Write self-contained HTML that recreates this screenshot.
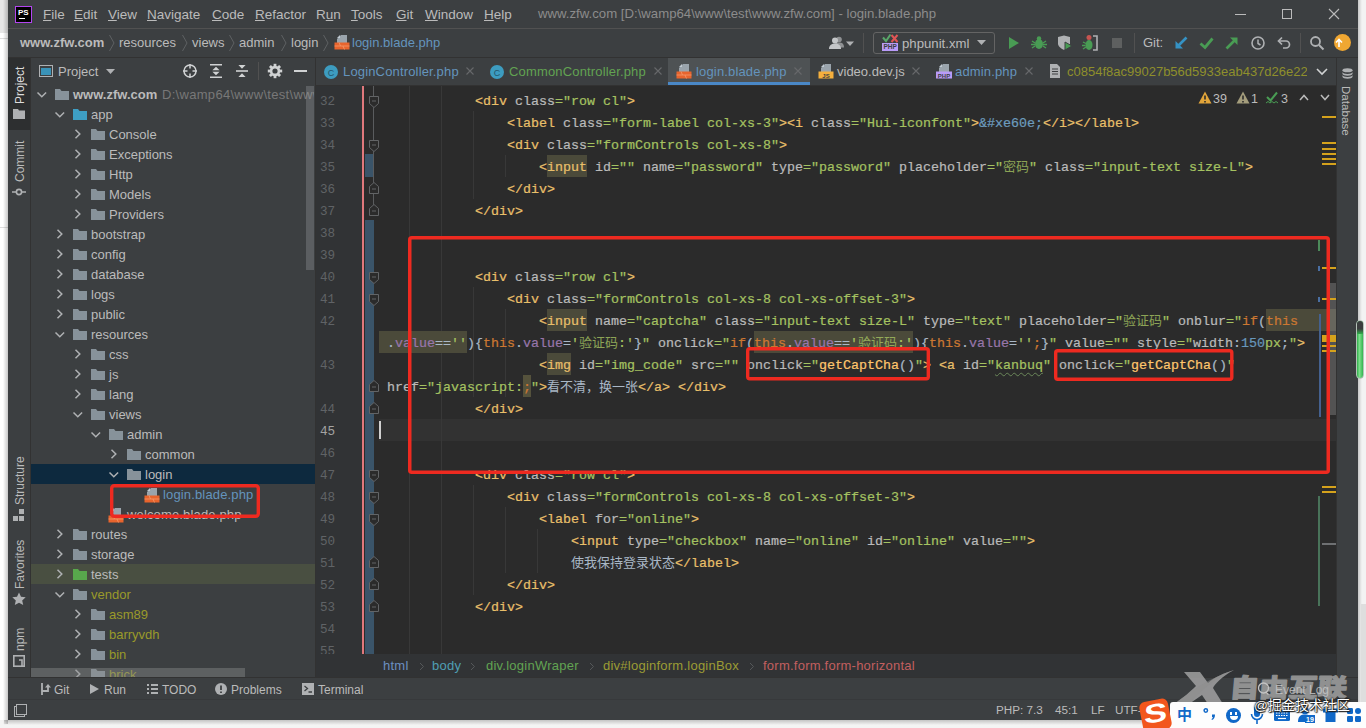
<!DOCTYPE html>
<html><head><meta charset="utf-8"><title>PhpStorm</title>
<style>
*{box-sizing:border-box;margin:0;padding:0}
html,body{width:1366px;height:728px;overflow:hidden;background:#fff}
body{position:relative;font-family:'Liberation Sans','Noto Sans CJK SC',sans-serif;font-size:13px;color:#bbb}
.a{position:absolute}
.t{position:absolute;white-space:pre;line-height:20px;height:20px;margin-top:1px}
#win{position:absolute;left:8px;top:0;width:1350px;height:720px;background:#3c3f41;overflow:hidden}
.code{position:absolute;white-space:pre;font-family:'Liberation Mono','Noto Sans CJK SC',monospace;font-size:13.33px;line-height:22px;height:22px;color:#a9b7c6;margin-top:2px;-webkit-text-stroke:.22px}
.ln{position:absolute;left:0;width:26px;text-align:right;font-family:'Liberation Mono','Noto Sans CJK SC',monospace;font-size:12.6px;line-height:22px;height:22px;color:#606366;margin-top:2px}
.tg{color:#e8bf6a} .at{color:#bababa} .st{color:#a5c261} .kw{color:#cc7832} .nu{color:#6897bb} .en{color:#6d9cbe} .fn{color:#ffc66d} .pr{color:#9876aa}
.hl{background:#4b4a3a;padding:5px 0 2px} .hl2{background:#55523c;padding:5px 0 2px}
.row{position:absolute;left:0;width:285px;height:20px}
.fold{position:absolute;width:14px;height:11px}
.cj{font-size:13px;-webkit-text-stroke:0}.st .cj{opacity:.8}.wavy{text-decoration:underline wavy #6a8759;text-decoration-thickness:1px;text-underline-offset:3px}</style></head>
<body>
<div class="a" style="left:0;top:0;width:8px;height:33px;background:#e6e6e6"></div>
<div class="a" style="left:0;top:38px;width:8px;height:1px;background:#ddd"></div>
<div class="a" style="left:0;top:227px;width:8px;height:1px;background:#ddd"></div>
<div class="a" style="left:1358px;top:0;width:8px;height:728px;background:#f3f3f3"></div>
<div class="a" style="left:0;top:720px;width:1366px;height:8px;background:#f4f4f4"></div>
<div class="a" style="left:3px;top:0;width:5px;height:724px;background:linear-gradient(90deg,rgba(0,0,0,0),rgba(0,0,0,.22))"></div>
<div class="a" style="left:4px;top:720px;width:1358px;height:5px;background:linear-gradient(rgba(0,0,0,.2),rgba(0,0,0,0))"></div>
<div class="a" style="left:1358px;top:0;width:4px;height:724px;background:linear-gradient(90deg,rgba(0,0,0,.18),rgba(0,0,0,0))"></div>
<div id="win">
<div class="a" style="left:0;top:0;width:1350px;height:29px;background:#3c3f41"></div>
<div class="a" style="left:0;top:28px;width:1350px;height:1px;background:#515151"></div>
<div class="a" style="left:7px;top:6px;width:17px;height:17px;background:#000;border:1px solid #b345f1"><span class="a" style="left:2px;top:1px;font:bold 8px/9px 'Liberation Sans','Noto Sans CJK SC',sans-serif;color:#fff">PS</span><span class="a" style="left:3px;top:11px;width:6px;height:1px;background:#fff"></span></div>
<span class="t" style="left:35px;top:4px;font-size:13.5px;color:#bbb"><u>F</u>ile</span>
<span class="t" style="left:66px;top:4px;font-size:13.5px;color:#bbb"><u>E</u>dit</span>
<span class="t" style="left:100px;top:4px;font-size:13.5px;color:#bbb"><u>V</u>iew</span>
<span class="t" style="left:139px;top:4px;font-size:13.5px;color:#bbb"><u>N</u>avigate</span>
<span class="t" style="left:204px;top:4px;font-size:13.5px;color:#bbb"><u>C</u>ode</span>
<span class="t" style="left:247px;top:4px;font-size:13.5px;color:#bbb"><u>R</u>efactor</span>
<span class="t" style="left:308px;top:4px;font-size:13.5px;color:#bbb">R<u>u</u>n</span>
<span class="t" style="left:343px;top:4px;font-size:13.5px;color:#bbb"><u>T</u>ools</span>
<span class="t" style="left:388px;top:4px;font-size:13.5px;color:#bbb"><u>G</u>it</span>
<span class="t" style="left:417px;top:4px;font-size:13.5px;color:#bbb"><u>W</u>indow</span>
<span class="t" style="left:476px;top:4px;font-size:13.5px;color:#bbb"><u>H</u>elp</span>
<span class="t" style="left:530px;top:3px;font-size:13.2px;color:#8c8c8c">www.zfw.com [D:\wamp64\www\test\www.zfw.com] - login.blade.php</span>
<div class="a" style="left:1227px;top:14px;width:11px;height:1px;background:#bbb"></div>
<div class="a" style="left:1274px;top:9px;width:10px;height:10px;border:1px solid #bbb"></div>
<svg class="a" style="left:1320px;top:8px" width="12" height="12"><path d="M1 1L11 11M11 1L1 11" stroke="#bbb" stroke-width="1.1"/></svg>
<div class="a" style="left:0;top:29px;width:1350px;height:28px;background:#3c3f41"></div>
<div class="a" style="left:0;top:57px;width:1350px;height:1px;background:#323232"></div>
<span class="t" style="left:12px;top:32px;font-weight:bold;color:#bbb">www.zfw.com</span>
<span class="t" style="left:111px;top:32px">resources</span>
<span class="t" style="left:184px;top:32px">views</span>
<span class="t" style="left:231px;top:32px">admin</span>
<span class="t" style="left:283px;top:32px">login</span>
<svg class="a" style="left:100px;top:34px" width="8" height="18"><path d="M1.5 1L6 9L1.5 17" fill="none" stroke="#5e6163" stroke-width="1"/></svg>
<svg class="a" style="left:173px;top:34px" width="8" height="18"><path d="M1.5 1L6 9L1.5 17" fill="none" stroke="#5e6163" stroke-width="1"/></svg>
<svg class="a" style="left:220px;top:34px" width="8" height="18"><path d="M1.5 1L6 9L1.5 17" fill="none" stroke="#5e6163" stroke-width="1"/></svg>
<svg class="a" style="left:272px;top:34px" width="8" height="18"><path d="M1.5 1L6 9L1.5 17" fill="none" stroke="#5e6163" stroke-width="1"/></svg>
<svg class="a" style="left:314px;top:34px" width="8" height="18"><path d="M1.5 1L6 9L1.5 17" fill="none" stroke="#5e6163" stroke-width="1"/></svg>
<svg class="a" style="left:326px;top:34px" width="16" height="16" viewBox="0 0 16 16"><path d="M7 1h6v8H3V5z" fill="#9aa4ac"/><path d="M6 1v3H3z" fill="#c0cad2"/><rect x=".5" y="8.500" width="15" height="7" fill="#e8642d"/><path d="M.5 12h15M5 8.500l1.500 3.500M9 12l1.500 3.500" stroke="#f59a6d" stroke-width=".8"/></svg>
<span class="t" style="left:344px;top:32px;color:#6494bd">login.blade.php</span>
<svg class="a" style="left:821px;top:36px" width="28" height="14" viewBox="0 0 28 14"><circle cx="10" cy="3.5" r="2.800" fill="#8f9193"/><path d="M5 11.500c0-4 2-5 5-5s5 1 5 5z" fill="#8f9193"/><circle cx="6" cy="4.500" r="3" fill="#c4c6c8"/><path d="M0 13c0-4 3-5.500 6-5.500s6 1.500 6 5.500z" fill="#c4c6c8"/><path d="M17 5.500h8l-4 4.500z" fill="#afb1b3"/></svg>
<div class="a" style="left:855px;top:33px;width:1px;height:20px;background:#515151"></div>
<div class="a" style="left:865px;top:32px;width:122px;height:22px;border:1px solid #646464;border-radius:3px"></div>
<div class="a" style="left:874px;top:43px;width:16px;height:8px;background:#b99bf8"><span class="a" style="left:1.500px;top:0;font:bold 6.500px/8px 'Liberation Sans','Noto Sans CJK SC',sans-serif;color:#3c3f41">PHP</span></div>
<svg class="a" style="left:874px;top:33px" width="17" height="10"><path d="M1 4.500L4 8L8.500 1.500" stroke="#59a869" stroke-width="2" fill="none"/><path d="M9.500 2L15.500 9M15.500 2L9.500 9" stroke="#e05555" stroke-width="2" fill="none"/></svg>
<span class="t" style="left:894px;top:33px;color:#bbb;font-size:13.2px">phpunit.xml</span>
<svg class="a" style="left:969px;top:40px" width="10" height="6"><path d="M0 0h9l-4.5 5z" fill="#afb1b3"/></svg>
<svg class="a" style="left:1000px;top:36px" width="12" height="14"><path d="M1 1l10 6-10 6z" fill="#499c54"/></svg>
<svg class="a" style="left:1023px;top:35px" width="16" height="16" viewBox="0 0 16 16"><ellipse cx="8" cy="9" rx="4" ry="5" fill="#499c54"/><circle cx="8" cy="3.5" r="2.2" fill="#499c54"/><path d="M1 6l3 2M15 6l-3 2M1 13l3-2M15 13l-3-2M0 9.5h4M16 9.5h-4" stroke="#499c54" stroke-width="1.4"/></svg>
<svg class="a" style="left:1048px;top:35px" width="17" height="16" viewBox="0 0 17 16"><path d="M2 2l6-1.5L14 2v7c0 3-6 6-6 6S2 12 2 9z" fill="#afb1b3"/><path d="M9 7l7 4-7 4z" fill="#499c54" stroke="#3c3f41" stroke-width="1"/></svg>
<svg class="a" style="left:1074px;top:34px" width="17" height="18" viewBox="0 0 17 18"><circle cx="7" cy="3.5" r="2.5" fill="#c75450"/><ellipse cx="7" cy="11" rx="3.5" ry="5" fill="#499c54"/><path d="M1 8l3 1.5M1 15l3-2M0 11.5h3.5" stroke="#499c54" stroke-width="1.3"/><path d="M11 2h4v14h-4" fill="none" stroke="#afb1b3" stroke-width="1.6"/></svg>
<div class="a" style="left:1104px;top:38px;width:10px;height:10px;background:#5e6060"></div>
<div class="a" style="left:1126px;top:33px;width:1px;height:20px;background:#515151"></div>
<span class="t" style="left:1135px;top:32px;color:#bbb">Git:</span>
<svg class="a" style="left:1166px;top:36px" width="14" height="14"><path d="M12.500 1.500L4 10" fill="none" stroke="#3592c4" stroke-width="2.600"/><path d="M1.500 5v7.500H9z" fill="#3592c4"/></svg>
<svg class="a" style="left:1191px;top:36px" width="15" height="14"><path d="M1.500 7.500l4.500 4L13.500 2.500" fill="none" stroke="#499c54" stroke-width="2.800"/></svg>
<svg class="a" style="left:1217px;top:36px" width="14" height="14"><path d="M1.500 12.500L10 4" fill="none" stroke="#499c54" stroke-width="2.600"/><path d="M5 1.500h7.500V9z" fill="#499c54"/></svg>
<svg class="a" style="left:1242px;top:35px" width="16" height="16"><circle cx="8" cy="8" r="6" fill="none" stroke="#afb1b3" stroke-width="1.6"/><path d="M8 4.5V8.5l2.5 1.5" fill="none" stroke="#afb1b3" stroke-width="1.5"/></svg>
<svg class="a" style="left:1268px;top:35px" width="16" height="16"><path d="M3 6h7a3.5 3.5 0 010 7H7" fill="none" stroke="#afb1b3" stroke-width="1.7"/><path d="M6 2.5L2.5 6L6 9.5" fill="none" stroke="#afb1b3" stroke-width="1.7"/></svg>
<div class="a" style="left:1292px;top:33px;width:1px;height:20px;background:#515151"></div>
<svg class="a" style="left:1301px;top:35px" width="16" height="16"><circle cx="6.5" cy="6.5" r="4.5" fill="none" stroke="#afb1b3" stroke-width="1.8"/><path d="M10 10l4.5 4.5" stroke="#afb1b3" stroke-width="2"/></svg>
<div class="a" style="left:1326px;top:34px;width:17px;height:17px;border-radius:9px;background:#f0a732"></div>
<svg class="a" style="left:1323px;top:35px" width="16" height="16"><path d="M8 12V5M5 7.5L8 4.5l3 3" fill="none" stroke="#fff" stroke-width="1.6"/></svg>
<div class="a" style="left:0;top:58px;width:22px;height:620px;background:#3c3f41"></div>
<div class="a" style="left:0;top:58px;width:22px;height:72px;background:#2d2f30"></div>
<div class="a" style="left:22px;top:58px;width:1px;height:620px;background:#323232"></div>
<span class="a" style="left:4px;top:104px;transform-origin:0 0;transform:rotate(-90deg);white-space:pre;font-size:12px;line-height:16px;height:16px;color:#ddd">Project</span>
<svg class="a" style="left:5px;top:108px" width="12" height="11"><path d="M0 1h5l1 1.5h6V11H0z" fill="#afb1b3"/></svg>
<span class="a" style="left:4px;top:182px;transform-origin:0 0;transform:rotate(-90deg);white-space:pre;font-size:12px;line-height:16px;height:16px;color:#bbb">Commit</span>
<svg class="a" style="left:4px;top:186px" width="14" height="12"><circle cx="7" cy="6" r="2.600" fill="none" stroke="#afb1b3" stroke-width="1.600"/><path d="M0 6h4M10 6h4" stroke="#afb1b3" stroke-width="1.600"/></svg>
<span class="a" style="left:4px;top:504.5px;transform-origin:0 0;transform:rotate(-90deg);white-space:pre;font-size:12px;line-height:16px;height:16px;color:#bbb">Structure</span>
<svg class="a" style="left:5px;top:509px" width="12" height="12"><rect x="6" y="0" width="5" height="5" fill="#afb1b3"/><rect x="0" y="7" width="5" height="5" fill="#afb1b3"/><rect x="6" y="7" width="5" height="5" fill="#afb1b3"/></svg>
<span class="a" style="left:4px;top:589px;transform-origin:0 0;transform:rotate(-90deg);white-space:pre;font-size:12px;line-height:16px;height:16px;color:#bbb">Favorites</span>
<svg class="a" style="left:4px;top:592px" width="14" height="14" viewBox="0 0 14 14"><path d="M7 .5l2 4.3 4.7.5-3.5 3.2 1 4.6L7 10.800 2.800 13.100l1-4.600L.3 5.300 5 4.800z" fill="#afb1b3"/></svg>
<span class="a" style="left:4px;top:650.5px;transform-origin:0 0;transform:rotate(-90deg);white-space:pre;font-size:12px;line-height:16px;height:16px;color:#bbb">npm</span>
<svg class="a" style="left:5px;top:655px" width="12" height="12"><rect x=".8" y=".8" width="10.400" height="10.400" fill="none" stroke="#afb1b3" stroke-width="1.6"/><path d="M6 5h3v6" fill="none" stroke="#afb1b3" stroke-width="1.6"/></svg>
<div class="a" style="left:23px;top:58px;width:284px;height:620px;background:#3c3f41"></div>
<div class="a" style="left:31px;top:65px;width:14px;height:12px;border:1px solid #afb1b3;background:#3c3f41"><div class="a" style="left:1px;top:2px;width:10px;height:7px;background:#3a93b8"></div></div>
<span class="t" style="left:50px;top:61px;color:#bbb">Project</span>
<svg class="a" style="left:98px;top:69px" width="9" height="6"><path d="M0 0h9l-4.5 5z" fill="#afb1b3"/></svg>
<svg class="a" style="left:174px;top:63px" width="16" height="16"><circle cx="8" cy="8" r="6" fill="none" stroke="#d0d2d3" stroke-width="1.5"/><path d="M8 1v4.500M8 10.500V15M1 8h4.500M10.500 8H15" stroke="#d0d2d3" stroke-width="1.5"/></svg>
<svg class="a" style="left:200px;top:63px" width="16" height="16"><path d="M2 1.800h12M2 14.200h12" stroke="#d0d2d3" stroke-width="1.600"/><path d="M8 3.800l3.600 3.400H4.400zM8 12.200l3.600-3.400H4.400z" fill="#d0d2d3"/></svg>
<svg class="a" style="left:226px;top:63px" width="16" height="16"><path d="M2 8h12" stroke="#d0d2d3" stroke-width="1.600"/><path d="M8 5.800l3.600-3.800H4.400zM8 10.200l3.600 3.800H4.400z" fill="#d0d2d3"/></svg>
<div class="a" style="left:250px;top:62px;width:1px;height:18px;background:#515151"></div>
<svg class="a" style="left:259px;top:63px" width="16" height="16" viewBox="0 0 16 16"><rect x="6.600" y=".8" width="2.800" height="3.400" transform="rotate(0 8 8)" fill="#d0d2d3"/><rect x="6.600" y=".8" width="2.800" height="3.400" transform="rotate(45 8 8)" fill="#d0d2d3"/><rect x="6.600" y=".8" width="2.800" height="3.400" transform="rotate(90 8 8)" fill="#d0d2d3"/><rect x="6.600" y=".8" width="2.800" height="3.400" transform="rotate(135 8 8)" fill="#d0d2d3"/><rect x="6.600" y=".8" width="2.800" height="3.400" transform="rotate(180 8 8)" fill="#d0d2d3"/><rect x="6.600" y=".8" width="2.800" height="3.400" transform="rotate(225 8 8)" fill="#d0d2d3"/><rect x="6.600" y=".8" width="2.800" height="3.400" transform="rotate(270 8 8)" fill="#d0d2d3"/><rect x="6.600" y=".8" width="2.800" height="3.400" transform="rotate(315 8 8)" fill="#d0d2d3"/><circle cx="8" cy="8" r="3.900" fill="none" stroke="#d0d2d3" stroke-width="2.600"/></svg>
<div class="a" style="left:286px;top:70px;width:13px;height:2px;background:#d0d2d3"></div>
<svg class="a" style="left:28px;top:91px" width="12" height="8"><path d="M1.500 1.500L5.800 5.800L10.100 1.500" fill="none" stroke="#afb1b3" stroke-width="1.500"/></svg>
<svg class="a" style="left:47px;top:89px" width="14" height="11" viewBox="0 0 14 11"><path d="M0 0h5l1.500 2H14v9H0z" fill="#87929a"/></svg>
<span class="t" style="left:65px;top:84px;color:#bbb;font-weight:bold">www.zfw.com</span>
<span class="t" style="left:154px;top:84px;color:#787878;width:152px;overflow:hidden;letter-spacing:.3px">D:\wamp64\www\test\www.zfw.com</span>
<svg class="a" style="left:46px;top:111px" width="12" height="8"><path d="M1.500 1.500L5.800 5.800L10.100 1.500" fill="none" stroke="#afb1b3" stroke-width="1.500"/></svg>
<svg class="a" style="left:65px;top:109px" width="14" height="11" viewBox="0 0 14 11"><path d="M0 0h5l1.500 2H14v9H0z" fill="#3e9fc4"/></svg>
<span class="t" style="left:83px;top:104px;color:#bbb;font-weight:normal">app</span>
<svg class="a" style="left:66px;top:128px" width="8" height="12"><path d="M1.500 1.800L5.800 6L1.500 10.200" fill="none" stroke="#afb1b3" stroke-width="1.500"/></svg>
<svg class="a" style="left:83px;top:129px" width="14" height="11" viewBox="0 0 14 11"><path d="M0 0h5l1.500 2H14v9H0z" fill="#87929a"/></svg>
<span class="t" style="left:101px;top:124px;color:#bbb;font-weight:normal">Console</span>
<svg class="a" style="left:66px;top:148px" width="8" height="12"><path d="M1.500 1.800L5.800 6L1.500 10.200" fill="none" stroke="#afb1b3" stroke-width="1.500"/></svg>
<svg class="a" style="left:83px;top:149px" width="14" height="11" viewBox="0 0 14 11"><path d="M0 0h5l1.500 2H14v9H0z" fill="#87929a"/></svg>
<span class="t" style="left:101px;top:144px;color:#bbb;font-weight:normal">Exceptions</span>
<svg class="a" style="left:66px;top:168px" width="8" height="12"><path d="M1.500 1.800L5.800 6L1.500 10.200" fill="none" stroke="#afb1b3" stroke-width="1.500"/></svg>
<svg class="a" style="left:83px;top:169px" width="14" height="11" viewBox="0 0 14 11"><path d="M0 0h5l1.500 2H14v9H0z" fill="#87929a"/></svg>
<span class="t" style="left:101px;top:164px;color:#bbb;font-weight:normal">Http</span>
<svg class="a" style="left:66px;top:188px" width="8" height="12"><path d="M1.500 1.800L5.800 6L1.500 10.200" fill="none" stroke="#afb1b3" stroke-width="1.500"/></svg>
<svg class="a" style="left:83px;top:189px" width="14" height="11" viewBox="0 0 14 11"><path d="M0 0h5l1.500 2H14v9H0z" fill="#87929a"/></svg>
<span class="t" style="left:101px;top:184px;color:#bbb;font-weight:normal">Models</span>
<svg class="a" style="left:66px;top:208px" width="8" height="12"><path d="M1.500 1.800L5.800 6L1.500 10.200" fill="none" stroke="#afb1b3" stroke-width="1.500"/></svg>
<svg class="a" style="left:83px;top:209px" width="14" height="11" viewBox="0 0 14 11"><path d="M0 0h5l1.500 2H14v9H0z" fill="#87929a"/></svg>
<span class="t" style="left:101px;top:204px;color:#bbb;font-weight:normal">Providers</span>
<svg class="a" style="left:48px;top:228px" width="8" height="12"><path d="M1.500 1.800L5.800 6L1.500 10.200" fill="none" stroke="#afb1b3" stroke-width="1.500"/></svg>
<svg class="a" style="left:65px;top:229px" width="14" height="11" viewBox="0 0 14 11"><path d="M0 0h5l1.500 2H14v9H0z" fill="#87929a"/></svg>
<span class="t" style="left:83px;top:224px;color:#bbb;font-weight:normal">bootstrap</span>
<svg class="a" style="left:48px;top:248px" width="8" height="12"><path d="M1.500 1.800L5.800 6L1.500 10.200" fill="none" stroke="#afb1b3" stroke-width="1.500"/></svg>
<svg class="a" style="left:65px;top:249px" width="14" height="11" viewBox="0 0 14 11"><path d="M0 0h5l1.500 2H14v9H0z" fill="#87929a"/></svg>
<span class="t" style="left:83px;top:244px;color:#bbb;font-weight:normal">config</span>
<svg class="a" style="left:48px;top:268px" width="8" height="12"><path d="M1.500 1.800L5.800 6L1.500 10.200" fill="none" stroke="#afb1b3" stroke-width="1.500"/></svg>
<svg class="a" style="left:65px;top:269px" width="14" height="11" viewBox="0 0 14 11"><path d="M0 0h5l1.500 2H14v9H0z" fill="#87929a"/></svg>
<span class="t" style="left:83px;top:264px;color:#bbb;font-weight:normal">database</span>
<svg class="a" style="left:48px;top:288px" width="8" height="12"><path d="M1.500 1.800L5.800 6L1.500 10.200" fill="none" stroke="#afb1b3" stroke-width="1.500"/></svg>
<svg class="a" style="left:65px;top:289px" width="14" height="11" viewBox="0 0 14 11"><path d="M0 0h5l1.500 2H14v9H0z" fill="#87929a"/></svg>
<span class="t" style="left:83px;top:284px;color:#bbb;font-weight:normal">logs</span>
<svg class="a" style="left:48px;top:308px" width="8" height="12"><path d="M1.500 1.800L5.800 6L1.500 10.200" fill="none" stroke="#afb1b3" stroke-width="1.500"/></svg>
<svg class="a" style="left:65px;top:309px" width="14" height="11" viewBox="0 0 14 11"><path d="M0 0h5l1.500 2H14v9H0z" fill="#87929a"/></svg>
<span class="t" style="left:83px;top:304px;color:#bbb;font-weight:normal">public</span>
<svg class="a" style="left:46px;top:331px" width="12" height="8"><path d="M1.500 1.500L5.800 5.800L10.100 1.500" fill="none" stroke="#afb1b3" stroke-width="1.500"/></svg>
<svg class="a" style="left:65px;top:329px" width="14" height="11" viewBox="0 0 14 11"><path d="M0 0h5l1.500 2H14v9H0z" fill="#87929a"/></svg>
<span class="t" style="left:83px;top:324px;color:#bbb;font-weight:normal">resources</span>
<svg class="a" style="left:66px;top:348px" width="8" height="12"><path d="M1.500 1.800L5.800 6L1.500 10.200" fill="none" stroke="#afb1b3" stroke-width="1.500"/></svg>
<svg class="a" style="left:83px;top:349px" width="14" height="11" viewBox="0 0 14 11"><path d="M0 0h5l1.500 2H14v9H0z" fill="#87929a"/></svg>
<span class="t" style="left:101px;top:344px;color:#bbb;font-weight:normal">css</span>
<svg class="a" style="left:66px;top:368px" width="8" height="12"><path d="M1.500 1.800L5.800 6L1.500 10.200" fill="none" stroke="#afb1b3" stroke-width="1.500"/></svg>
<svg class="a" style="left:83px;top:369px" width="14" height="11" viewBox="0 0 14 11"><path d="M0 0h5l1.500 2H14v9H0z" fill="#87929a"/></svg>
<span class="t" style="left:101px;top:364px;color:#bbb;font-weight:normal">js</span>
<svg class="a" style="left:66px;top:388px" width="8" height="12"><path d="M1.500 1.800L5.800 6L1.500 10.200" fill="none" stroke="#afb1b3" stroke-width="1.500"/></svg>
<svg class="a" style="left:83px;top:389px" width="14" height="11" viewBox="0 0 14 11"><path d="M0 0h5l1.500 2H14v9H0z" fill="#87929a"/></svg>
<span class="t" style="left:101px;top:384px;color:#bbb;font-weight:normal">lang</span>
<svg class="a" style="left:64px;top:411px" width="12" height="8"><path d="M1.500 1.500L5.800 5.800L10.100 1.500" fill="none" stroke="#afb1b3" stroke-width="1.500"/></svg>
<svg class="a" style="left:83px;top:409px" width="14" height="11" viewBox="0 0 14 11"><path d="M0 0h5l1.500 2H14v9H0z" fill="#87929a"/></svg>
<span class="t" style="left:101px;top:404px;color:#bbb;font-weight:normal">views</span>
<svg class="a" style="left:82px;top:431px" width="12" height="8"><path d="M1.500 1.500L5.800 5.800L10.100 1.500" fill="none" stroke="#afb1b3" stroke-width="1.500"/></svg>
<svg class="a" style="left:101px;top:429px" width="14" height="11" viewBox="0 0 14 11"><path d="M0 0h5l1.500 2H14v9H0z" fill="#87929a"/></svg>
<span class="t" style="left:119px;top:424px;color:#bbb;font-weight:normal">admin</span>
<svg class="a" style="left:102px;top:448px" width="8" height="12"><path d="M1.500 1.800L5.800 6L1.500 10.200" fill="none" stroke="#afb1b3" stroke-width="1.500"/></svg>
<svg class="a" style="left:119px;top:449px" width="14" height="11" viewBox="0 0 14 11"><path d="M0 0h5l1.500 2H14v9H0z" fill="#87929a"/></svg>
<span class="t" style="left:137px;top:444px;color:#bbb;font-weight:normal">common</span>
<div class="a" style="left:23px;top:464px;width:284px;height:20px;background:#0d293e"></div>
<svg class="a" style="left:100px;top:471px" width="12" height="8"><path d="M1.500 1.500L5.800 5.800L10.100 1.500" fill="none" stroke="#afb1b3" stroke-width="1.500"/></svg>
<svg class="a" style="left:119px;top:469px" width="14" height="11" viewBox="0 0 14 11"><path d="M0 0h5l1.500 2H14v9H0z" fill="#87929a"/></svg>
<span class="t" style="left:137px;top:464px;color:#bbb;font-weight:normal">login</span>
<svg class="a" style="left:136px;top:487px" width="16" height="16" viewBox="0 0 16 16"><path d="M7 1h6v8H3V5z" fill="#9aa4ac"/><path d="M6 1v3H3z" fill="#c0cad2"/><rect x=".5" y="8.500" width="15" height="7" fill="#e8642d"/><path d="M.5 12h15M5 8.500l1.500 3.500M9 12l1.500 3.500" stroke="#f59a6d" stroke-width=".8"/></svg>
<span class="t" style="left:155px;top:484px;color:#6494bd;font-weight:normal;letter-spacing:.15px">login.blade.php</span>
<svg class="a" style="left:100px;top:507px" width="16" height="16" viewBox="0 0 16 16"><path d="M7 1h6v8H3V5z" fill="#9aa4ac"/><path d="M6 1v3H3z" fill="#c0cad2"/><rect x=".5" y="8.500" width="15" height="7" fill="#e8642d"/><path d="M.5 12h15M5 8.500l1.500 3.500M9 12l1.500 3.500" stroke="#f59a6d" stroke-width=".8"/></svg>
<span class="t" style="left:119px;top:504px;color:#bbb;font-weight:normal;letter-spacing:.15px">welcome.blade.php</span>
<svg class="a" style="left:48px;top:528px" width="8" height="12"><path d="M1.500 1.800L5.800 6L1.500 10.200" fill="none" stroke="#afb1b3" stroke-width="1.500"/></svg>
<svg class="a" style="left:65px;top:529px" width="14" height="11" viewBox="0 0 14 11"><path d="M0 0h5l1.500 2H14v9H0z" fill="#87929a"/></svg>
<span class="t" style="left:83px;top:524px;color:#bbb;font-weight:normal">routes</span>
<svg class="a" style="left:48px;top:548px" width="8" height="12"><path d="M1.500 1.800L5.800 6L1.500 10.200" fill="none" stroke="#afb1b3" stroke-width="1.500"/></svg>
<svg class="a" style="left:65px;top:549px" width="14" height="11" viewBox="0 0 14 11"><path d="M0 0h5l1.500 2H14v9H0z" fill="#87929a"/></svg>
<span class="t" style="left:83px;top:544px;color:#bbb;font-weight:normal">storage</span>
<div class="a" style="left:23px;top:564px;width:284px;height:20px;background:#494f41"></div>
<svg class="a" style="left:48px;top:568px" width="8" height="12"><path d="M1.500 1.800L5.800 6L1.500 10.200" fill="none" stroke="#afb1b3" stroke-width="1.500"/></svg>
<svg class="a" style="left:65px;top:569px" width="14" height="11" viewBox="0 0 14 11"><path d="M0 0h5l1.500 2H14v9H0z" fill="#58a84c"/></svg>
<span class="t" style="left:83px;top:564px;color:#bbb;font-weight:normal">tests</span>
<svg class="a" style="left:46px;top:591px" width="12" height="8"><path d="M1.500 1.500L5.800 5.800L10.100 1.500" fill="none" stroke="#afb1b3" stroke-width="1.500"/></svg>
<svg class="a" style="left:65px;top:589px" width="14" height="11" viewBox="0 0 14 11"><path d="M0 0h5l1.500 2H14v9H0z" fill="#87929a"/></svg>
<span class="t" style="left:83px;top:584px;color:#9a9a2a;font-weight:normal">vendor</span>
<svg class="a" style="left:66px;top:608px" width="8" height="12"><path d="M1.500 1.800L5.800 6L1.500 10.200" fill="none" stroke="#afb1b3" stroke-width="1.500"/></svg>
<svg class="a" style="left:83px;top:609px" width="14" height="11" viewBox="0 0 14 11"><path d="M0 0h5l1.500 2H14v9H0z" fill="#87929a"/></svg>
<span class="t" style="left:101px;top:604px;color:#9a9a2a;font-weight:normal">asm89</span>
<svg class="a" style="left:66px;top:628px" width="8" height="12"><path d="M1.500 1.800L5.800 6L1.500 10.200" fill="none" stroke="#afb1b3" stroke-width="1.500"/></svg>
<svg class="a" style="left:83px;top:629px" width="14" height="11" viewBox="0 0 14 11"><path d="M0 0h5l1.500 2H14v9H0z" fill="#87929a"/></svg>
<span class="t" style="left:101px;top:624px;color:#9a9a2a;font-weight:normal">barryvdh</span>
<svg class="a" style="left:66px;top:648px" width="8" height="12"><path d="M1.500 1.800L5.800 6L1.500 10.200" fill="none" stroke="#afb1b3" stroke-width="1.500"/></svg>
<svg class="a" style="left:83px;top:649px" width="14" height="11" viewBox="0 0 14 11"><path d="M0 0h5l1.500 2H14v9H0z" fill="#87929a"/></svg>
<span class="t" style="left:101px;top:644px;color:#9a9a2a;font-weight:normal">bin</span>
<svg class="a" style="left:66px;top:668px" width="8" height="12"><path d="M1.500 1.800L5.800 6L1.500 10.200" fill="none" stroke="#afb1b3" stroke-width="1.500"/></svg>
<svg class="a" style="left:83px;top:669px" width="14" height="11" viewBox="0 0 14 11"><path d="M0 0h5l1.500 2H14v9H0z" fill="#87929a"/></svg>
<span class="t" style="left:101px;top:664px;color:#9a9a2a;font-weight:normal">brick</span>
<div class="a" style="left:298px;top:86px;width:8px;height:184px;background:rgba(160,162,164,.32)"></div>
<div class="a" style="left:23px;top:668px;width:214px;height:8.500px;background:rgba(140,142,144,.42)"></div>
<div class="a" style="left:307px;top:58px;width:1px;height:620px;background:#323232"></div>
<div class="a" style="left:308px;top:58px;width:1020px;height:28px;background:#3c3f41"></div>
<div class="a" style="left:308px;top:85px;width:1020px;height:1px;background:#323232"></div>
<div class="a" style="left:660px;top:58px;width:142px;height:27px;background:#4e5254"></div>
<div class="a" style="left:660px;top:82px;width:142px;height:3px;background:#4a88c7"></div>
<svg class="a" style="left:316px;top:65px" width="14" height="14"><circle cx="7" cy="7" r="7" fill="#3d9cc0"/><text x="7" y="10.500" text-anchor="middle" font-family="Liberation Sans" font-size="9" fill="#24566b">C</text></svg>
<span class="t" style="left:335px;top:61px;letter-spacing:.16px;color:#6494bd">LoginController.php</span>
<svg class="a" style="left:458px;top:67px" width="8" height="8"><path d="M.5.500l7 7M7.500.500l-7 7" stroke="#67696b" stroke-width="1.100"/></svg>
<svg class="a" style="left:482px;top:65px" width="14" height="14"><circle cx="7" cy="7" r="7" fill="#3d9cc0"/><text x="7" y="10.500" text-anchor="middle" font-family="Liberation Sans" font-size="9" fill="#24566b">C</text></svg>
<span class="t" style="left:501px;top:61px;letter-spacing:.16px;color:#62a352">CommonController.php</span>
<svg class="a" style="left:645.5px;top:67px" width="8" height="8"><path d="M.5.500l7 7M7.500.500l-7 7" stroke="#67696b" stroke-width="1.100"/></svg>
<svg class="a" style="left:668px;top:63px" width="16" height="16" viewBox="0 0 16 16"><path d="M7 1h6v8H3V5z" fill="#9aa4ac"/><path d="M6 1v3H3z" fill="#c0cad2"/><rect x=".5" y="8.500" width="15" height="7" fill="#e8642d"/><path d="M.5 12h15M5 8.500l1.500 3.500M9 12l1.500 3.500" stroke="#f59a6d" stroke-width=".8"/></svg>
<span class="t" style="left:688px;top:61px;letter-spacing:.16px;color:#6494bd">login.blade.php</span>
<svg class="a" style="left:786px;top:67px" width="8" height="8"><path d="M.5.500l7 7M7.500.500l-7 7" stroke="#67696b" stroke-width="1.100"/></svg>
<svg class="a" style="left:810px;top:63px" width="16" height="16" viewBox="0 0 16 16"><path d="M7 1h6v8H3V5z" fill="#9aa4ac"/><path d="M6 1v3H3z" fill="#c0cad2"/><rect x=".5" y="8.500" width="15" height="7" fill="#f4af3d"/><text x="8" y="14.500" text-anchor="middle" font-family="Liberation Sans" font-weight="bold" font-size="6" fill="#3c3f41">JS</text></svg>
<span class="t" style="left:829px;top:61px;color:#bbb">video.dev.js</span>
<svg class="a" style="left:904px;top:67px" width="8" height="8"><path d="M.5.500l7 7M7.500.500l-7 7" stroke="#67696b" stroke-width="1.100"/></svg>
<svg class="a" style="left:928px;top:63px" width="16" height="16" viewBox="0 0 16 16"><path d="M7 1h6v8H3V5z" fill="#9aa4ac"/><path d="M6 1v3H3z" fill="#c0cad2"/><rect x="0" y="8.500" width="16" height="7" fill="#b99bf8"/><text x="8" y="14.500" text-anchor="middle" font-family="Liberation Sans" font-weight="bold" font-size="6" fill="#3c3f41">PHP</text></svg>
<span class="t" style="left:947px;top:61px;letter-spacing:.16px;color:#6494bd">admin.php</span>
<svg class="a" style="left:1017px;top:67px" width="8" height="8"><path d="M.5.500l7 7M7.500.500l-7 7" stroke="#67696b" stroke-width="1.100"/></svg>
<svg class="a" style="left:1041px;top:64px" width="12" height="14"><path d="M1 0h7l3 3v11H1z" fill="#afb1b3"/><path d="M3 5h6M3 7.500h6M3 10h6" stroke="#3c3f41" stroke-width="1"/></svg>
<span class="t" style="left:1059px;top:61px;color:#8f8f2c;width:240px;overflow:hidden">c0854f8ac99027b56d5933eab437d26e22f</span>
<svg class="a" style="left:1308px;top:68px" width="12" height="8"><path d="M1 1l5 5 5-5" fill="none" stroke="#d0d2d3" stroke-width="1.600"/></svg>
<div class="a" style="left:1328px;top:58px;width:22px;height:620px;background:#3c3f41"></div>
<div class="a" style="left:1328px;top:58px;width:1px;height:620px;background:#323232"></div>
<svg class="a" style="left:1334px;top:68px" width="11" height="11.500" viewBox="0 0 12 13" preserveAspectRatio="none"><ellipse cx="6" cy="2.500" rx="5.500" ry="2.300" fill="#afb1b3"/><path d="M.5 4.500c0 3 11 3 11 0v2c0 3-11 3-11 0zM.5 8c0 3 11 3 11 0v2c0 3-11 3-11 0z" fill="#afb1b3"/></svg>
<span class="a" style="left:1345.500px;top:85.500px;transform-origin:0 0;transform:rotate(90deg);white-space:pre;font-size:11.600px;line-height:16px;height:16px;color:#bbb">Database</span>
<div id="ed" class="a" style="left:308px;top:86px;width:1020px;height:568px;background:#2b2b2b;overflow:hidden">
<div class="a" style="left:0;top:0;width:46px;height:568px;background:#313335"></div>
<div class="a" style="left:46px;top:0;width:2px;height:568px;background:#e0787c"></div>
<div class="a" style="left:49px;top:68px;width:9px;height:23px;background:#3a5469"></div>
<div class="a" style="left:49px;top:134px;width:9px;height:434px;background:#3a5469"></div>
<div class="a" style="left:63px;top:333px;width:959px;height:22px;background:#323232"></div>
<div class="a" style="left:57px;top:0;width:1px;height:124px;background:#5a5c5e"></div>
<div class="a" style="left:93px;top:-19px;width:1px;height:616px;background:#383838"></div>
<div class="a" style="left:125px;top:-19px;width:1px;height:616px;background:#383838"></div>
<div class="a" style="left:157px;top:25px;width:1px;height:88px;background:#383838"></div>
<div class="a" style="left:189px;top:69px;width:1px;height:22px;background:#383838"></div>
<div class="a" style="left:157px;top:201px;width:1px;height:110px;background:#383838"></div>
<div class="a" style="left:189px;top:223px;width:1px;height:88px;background:#383838"></div>
<div class="a" style="left:157px;top:399px;width:1px;height:110px;background:#383838"></div>
<div class="a" style="left:189px;top:421px;width:1px;height:66px;background:#383838"></div>
<div class="a" style="left:221px;top:443px;width:1px;height:44px;background:#383838"></div>
<span class="ln" style="top:3px;left:3px;width:16px;color:#606366">32</span>
<span class="code" style="left:159px;top:3px"><span class="tg">&lt;div</span> <span class="at">class</span><span class="st">="row cl"</span><span class="tg">&gt;</span></span>
<svg class="a" style="left:53px;top:10px" width="10" height="12" viewBox="0 0 10 12"><path d="M.5.500h9v7L5 11.500.5 7.500z" fill="#2b2b2b" stroke="#626466" stroke-width="1"/><path d="M3 5h4" stroke="#626466" stroke-width="1"/></svg>
<span class="ln" style="top:25px;left:3px;width:16px;color:#606366">33</span>
<span class="code" style="left:191px;top:25px"><span class="tg">&lt;label</span> <span class="at">class</span><span class="st">="form-label col-xs-3"</span><span class="tg">&gt;&lt;i</span> <span class="at">class</span><span class="st">="Hui-iconfont"</span><span class="tg">&gt;</span><span class="en">&amp;#xe60e;</span><span class="tg">&lt;/i&gt;&lt;/label&gt;</span></span>
<span class="ln" style="top:47px;left:3px;width:16px;color:#606366">34</span>
<span class="code" style="left:191px;top:47px"><span class="tg">&lt;div</span> <span class="at">class</span><span class="st">="formControls col-xs-8"</span><span class="tg">&gt;</span></span>
<svg class="a" style="left:53px;top:54px" width="10" height="12" viewBox="0 0 10 12"><path d="M.5.500h9v7L5 11.500.5 7.500z" fill="#2b2b2b" stroke="#626466" stroke-width="1"/><path d="M3 5h4" stroke="#626466" stroke-width="1"/></svg>
<span class="ln" style="top:69px;left:3px;width:16px;color:#606366">35</span>
<span class="code" style="left:223px;top:69px"><span class="tg">&lt;</span><span class="hl"><span class="tg">input</span></span> <span class="at">id</span><span class="st">=""</span> <span class="at">name</span><span class="st">="password"</span> <span class="at">type</span><span class="st">="password"</span> <span class="at">placeholder</span><span class="st">="<span class="cj">密码</span>"</span> <span class="at">class</span><span class="st">="input-text size-L"</span><span class="tg">&gt;</span></span>
<span class="ln" style="top:91px;left:3px;width:16px;color:#606366">36</span>
<span class="code" style="left:191px;top:91px"><span class="tg">&lt;/div&gt;</span></span>
<span class="ln" style="top:113px;left:3px;width:16px;color:#606366">37</span>
<span class="code" style="left:159px;top:113px"><span class="tg">&lt;/div&gt;</span></span>
<span class="ln" style="top:135px;left:3px;width:16px;color:#606366">38</span>
<span class="ln" style="top:157px;left:3px;width:16px;color:#606366">39</span>
<span class="ln" style="top:179px;left:3px;width:16px;color:#606366">40</span>
<span class="code" style="left:159px;top:179px"><span class="tg">&lt;div</span> <span class="at">class</span><span class="st">="row cl"</span><span class="tg">&gt;</span></span>
<svg class="a" style="left:53px;top:186px" width="10" height="12" viewBox="0 0 10 12"><path d="M.5.500h9v7L5 11.500.5 7.500z" fill="#2b2b2b" stroke="#626466" stroke-width="1"/><path d="M3 5h4" stroke="#626466" stroke-width="1"/></svg>
<span class="ln" style="top:201px;left:3px;width:16px;color:#606366">41</span>
<span class="code" style="left:191px;top:201px"><span class="tg">&lt;div</span> <span class="at">class</span><span class="st">="formControls col-xs-8 col-xs-offset-3"</span><span class="tg">&gt;</span></span>
<svg class="a" style="left:53px;top:208px" width="10" height="12" viewBox="0 0 10 12"><path d="M.5.500h9v7L5 11.500.5 7.500z" fill="#2b2b2b" stroke="#626466" stroke-width="1"/><path d="M3 5h4" stroke="#626466" stroke-width="1"/></svg>
<span class="ln" style="top:223px;left:3px;width:16px;color:#606366">42</span>
<span class="code" style="left:223px;top:223px"><span class="tg">&lt;</span><span class="hl"><span class="tg">input</span></span> <span class="at">name</span><span class="st">="captcha"</span> <span class="at">class</span><span class="st">="input-text size-L"</span> <span class="at">type</span><span class="st">="text"</span> <span class="at">placeholder</span><span class="st">="<span class="cj">验证码</span>"</span> <span class="at">onblur</span><span class="st">="</span><span class="kw">if</span>(<span class="hl" style="padding-right:60px"><span class="kw">this</span></span></span>
<span class="code" style="left:63px;top:245px"><span class="hl"> .<span class="pr">value</span>==<span class="st">''</span></span>){<span class="kw">this</span>.<span class="pr">value</span>=<span class="st">'<span class="cj">验证码</span>:'</span>}<span class="st">"</span> <span class="at">onclick</span><span class="st">="</span><span class="kw">if</span>(<span class="hl"><span class="kw">this</span>.<span class="pr">value</span>==<span class="st">'<span class="cj">验证码</span>:'</span></span>){<span class="kw">this</span>.<span class="pr">value</span>=<span class="st">''</span><span class="kw">;</span>}<span class="st">"</span> <span class="at">value</span><span class="st">=""</span> <span class="at">style</span><span class="st">="</span><span class="at">width</span>:<span class="nu">150</span><span class="st">px</span>;<span class="st">"</span><span class="tg">&gt;</span></span>
<span class="ln" style="top:267px;left:3px;width:16px;color:#606366">43</span>
<span class="code" style="left:223px;top:267px"><span class="tg">&lt;</span><span class="hl"><span class="tg">img</span></span> <span class="at">id</span><span class="st">="img_code"</span> <span class="at">src</span><span class="st">=""</span> <span class="at">onclick</span><span class="st">="</span><span class="fn">getCaptCha</span>()<span class="st">"</span><span class="tg">&gt;</span> <span class="tg">&lt;a</span> <span class="at">id</span><span class="st">="</span><span class="st wavy">kanbuq</span><span class="st">"</span> <span class="at">onclick</span><span class="st">="</span><span class="fn">getCaptCha</span>()<span class="st">"</span></span>
<span class="code" style="left:63px;top:289px"> <span class="at">href</span><span class="st">="javascript:</span><span class="hl2 kw">;</span><span class="st">"</span><span class="tg">&gt;</span><span class="cj">看不清，换一张</span><span class="tg">&lt;/a&gt;</span> <span class="tg">&lt;/div&gt;</span></span>
<span class="ln" style="top:311px;left:3px;width:16px;color:#606366">44</span>
<span class="code" style="left:159px;top:311px"><span class="tg">&lt;/div&gt;</span></span>
<span class="ln" style="top:333px;left:3px;width:16px;color:#a4a3a3">45</span>
<span class="ln" style="top:355px;left:3px;width:16px;color:#606366">46</span>
<span class="ln" style="top:377px;left:3px;width:16px;color:#606366">47</span>
<span class="code" style="left:159px;top:377px"><span class="tg">&lt;div</span> <span class="at">class</span><span class="st">="row cl"</span><span class="tg">&gt;</span></span>
<svg class="a" style="left:53px;top:384px" width="10" height="12" viewBox="0 0 10 12"><path d="M.5.500h9v7L5 11.500.5 7.500z" fill="#2b2b2b" stroke="#626466" stroke-width="1"/><path d="M3 5h4" stroke="#626466" stroke-width="1"/></svg>
<span class="ln" style="top:399px;left:3px;width:16px;color:#606366">48</span>
<span class="code" style="left:191px;top:399px"><span class="tg">&lt;div</span> <span class="at">class</span><span class="st">="formControls col-xs-8 col-xs-offset-3"</span><span class="tg">&gt;</span></span>
<svg class="a" style="left:53px;top:406px" width="10" height="12" viewBox="0 0 10 12"><path d="M.5.500h9v7L5 11.500.5 7.500z" fill="#2b2b2b" stroke="#626466" stroke-width="1"/><path d="M3 5h4" stroke="#626466" stroke-width="1"/></svg>
<span class="ln" style="top:421px;left:3px;width:16px;color:#606366">49</span>
<span class="code" style="left:223px;top:421px"><span class="tg">&lt;label</span> <span class="at">for</span><span class="st">="online"</span><span class="tg">&gt;</span></span>
<svg class="a" style="left:53px;top:428px" width="10" height="12" viewBox="0 0 10 12"><path d="M.5.500h9v7L5 11.500.5 7.500z" fill="#2b2b2b" stroke="#626466" stroke-width="1"/><path d="M3 5h4" stroke="#626466" stroke-width="1"/></svg>
<span class="ln" style="top:443px;left:3px;width:16px;color:#606366">50</span>
<span class="code" style="left:255px;top:443px"><span class="tg">&lt;input</span> <span class="at">type</span><span class="st">="checkbox"</span> <span class="at">name</span><span class="st">="online"</span> <span class="at">id</span><span class="st">="online"</span> <span class="at">value</span><span class="st">=""</span><span class="tg">&gt;</span></span>
<span class="ln" style="top:465px;left:3px;width:16px;color:#606366">51</span>
<span class="code" style="left:255px;top:465px"><span class="cj">使我保持登录状态</span><span class="tg">&lt;/label&gt;</span></span>
<span class="ln" style="top:487px;left:3px;width:16px;color:#606366">52</span>
<span class="code" style="left:191px;top:487px"><span class="tg">&lt;/div&gt;</span></span>
<span class="ln" style="top:509px;left:3px;width:16px;color:#606366">53</span>
<span class="code" style="left:159px;top:509px"><span class="tg">&lt;/div&gt;</span></span>
<span class="ln" style="top:531px;left:3px;width:16px;color:#606366">54</span>
<span class="ln" style="top:553px;left:3px;width:16px;color:#606366">55</span>
<svg class="a" style="left:53px;top:96px" width="10" height="12" viewBox="0 0 10 12"><path d="M.5 11.500h9v-7L5 .500.5 4.500z" fill="#2b2b2b" stroke="#626466" stroke-width="1"/><path d="M3 7h4" stroke="#626466" stroke-width="1"/></svg>
<svg class="a" style="left:53px;top:118px" width="10" height="12" viewBox="0 0 10 12"><path d="M.5 11.500h9v-7L5 .500.5 4.500z" fill="#2b2b2b" stroke="#626466" stroke-width="1"/><path d="M3 7h4" stroke="#626466" stroke-width="1"/></svg>
<svg class="a" style="left:53px;top:294px" width="10" height="12" viewBox="0 0 10 12"><path d="M.5 11.500h9v-7L5 .500.5 4.500z" fill="#2b2b2b" stroke="#626466" stroke-width="1"/><path d="M3 7h4" stroke="#626466" stroke-width="1"/></svg>
<svg class="a" style="left:53px;top:316px" width="10" height="12" viewBox="0 0 10 12"><path d="M.5 11.500h9v-7L5 .500.5 4.500z" fill="#2b2b2b" stroke="#626466" stroke-width="1"/><path d="M3 7h4" stroke="#626466" stroke-width="1"/></svg>
<svg class="a" style="left:53px;top:470px" width="10" height="12" viewBox="0 0 10 12"><path d="M.5 11.500h9v-7L5 .500.5 4.500z" fill="#2b2b2b" stroke="#626466" stroke-width="1"/><path d="M3 7h4" stroke="#626466" stroke-width="1"/></svg>
<svg class="a" style="left:53px;top:492px" width="10" height="12" viewBox="0 0 10 12"><path d="M.5 11.500h9v-7L5 .500.5 4.500z" fill="#2b2b2b" stroke="#626466" stroke-width="1"/><path d="M3 7h4" stroke="#626466" stroke-width="1"/></svg>
<svg class="a" style="left:53px;top:514px" width="10" height="12" viewBox="0 0 10 12"><path d="M.5 11.500h9v-7L5 .500.5 4.500z" fill="#2b2b2b" stroke="#626466" stroke-width="1"/><path d="M3 7h4" stroke="#626466" stroke-width="1"/></svg>
<div class="a" style="left:63px;top:335px;width:2px;height:18px;background:#d0d0d0"></div>
</div>
<div class="a" style="left:308px;top:654px;width:1020px;height:24px;background:#313335"></div>
<span class="t" style="left:375px;top:655px;letter-spacing:.24px;color:#6c8fc1">html</span>
<span class="t" style="left:424px;top:655px;letter-spacing:.24px;color:#4f9fb3">body</span>
<span class="t" style="left:478px;top:655px;letter-spacing:.24px;color:#62a352">div.loginWraper</span>
<span class="t" style="left:595px;top:655px;letter-spacing:.24px;color:#9c9c34">div#loginform.loginBox</span>
<span class="t" style="left:755px;top:655px;letter-spacing:.24px;color:#c25f5f">form.form.form-horizontal</span>
<svg class="a" style="left:411px;top:662px" width="6" height="9"><path d="M1 1l3.500 3.500L1 8" fill="none" stroke="#55585a" stroke-width="1"/></svg>
<svg class="a" style="left:462px;top:662px" width="6" height="9"><path d="M1 1l3.500 3.500L1 8" fill="none" stroke="#55585a" stroke-width="1"/></svg>
<svg class="a" style="left:581px;top:662px" width="6" height="9"><path d="M1 1l3.500 3.500L1 8" fill="none" stroke="#55585a" stroke-width="1"/></svg>
<svg class="a" style="left:741px;top:662px" width="6" height="9"><path d="M1 1l3.500 3.500L1 8" fill="none" stroke="#55585a" stroke-width="1"/></svg>
<div class="a" style="left:0;top:677px;width:1350px;height:23px;background:#3c3f41"></div>
<div class="a" style="left:0;top:677px;width:1350px;height:1px;background:#323232"></div>
<svg class="a" style="left:31px;top:683px" width="12" height="12"><path d="M3 0v12M3 8h6V4" fill="none" stroke="#afb1b3" stroke-width="1.800"/><path d="M6 4.500l3-3.500 3 3.500z" fill="#afb1b3"/></svg>
<span class="t" style="left:46px;top:679px;font-size:12px">Git</span>
<svg class="a" style="left:82px;top:684px" width="9" height="10"><path d="M0 0l9 5-9 5z" fill="#afb1b3"/></svg>
<span class="t" style="left:96px;top:679px;font-size:12px">Run</span>
<svg class="a" style="left:139px;top:684px" width="11" height="10"><path d="M0 1h2M0 5h2M0 9h2M4 1h7M4 5h7M4 9h7" stroke="#afb1b3" stroke-width="1.800"/></svg>
<span class="t" style="left:154px;top:679px;font-size:12px">TODO</span>
<svg class="a" style="left:207px;top:683px" width="12" height="12"><circle cx="6" cy="6" r="6" fill="#afb1b3"/><path d="M6 2.500v4.500M6 8.500v1.500" stroke="#3c3f41" stroke-width="1.800"/></svg>
<span class="t" style="left:223px;top:679px;font-size:12px">Problems</span>
<svg class="a" style="left:294px;top:683px" width="12" height="12"><rect width="12" height="12" fill="#afb1b3"/><path d="M2.500 3l3 2.500-3 2.500M6.500 9h3.500" fill="none" stroke="#3c3f41" stroke-width="1.300"/></svg>
<span class="t" style="left:310px;top:679px;font-size:12px">Terminal</span>
<div class="a" style="left:0;top:700px;width:1350px;height:20px;background:#3c3f41"></div>
<div class="a" style="left:0;top:699px;width:1350px;height:1px;background:#37393b"></div>
<div class="a" style="left:6px;top:706px;width:11px;height:11px;border:1px solid #afb1b3"></div><div class="a" style="left:8px;top:704px;width:11px;height:11px;border:1px solid #afb1b3;background:#3c3f41"></div>
<span class="t" style="left:988px;top:699px;font-size:11.700px;color:#bbb">PHP: 7.3</span>
<span class="t" style="left:1047px;top:699px;font-size:11.700px;color:#bbb">45:1</span>
<span class="t" style="left:1083px;top:699px;font-size:11.700px;color:#bbb">LF</span>
<span class="t" style="left:1107px;top:699px;font-size:11.700px;color:#bbb">UTF-8</span>
</div>
<svg class="a" style="left:1198px;top:91px" width="14" height="13" viewBox="0 0 14 13"><path d="M7 .500L13.500 12.500H.5z" fill="#e2a53a"/><path d="M7 4.500v4M7 10v1.500" stroke="#2b2b2b" stroke-width="1.600"/></svg>
<span class="t" style="left:1213px;top:88px;font-size:12.500px;color:#bbb">39</span>
<svg class="a" style="left:1236px;top:91px" width="14" height="13" viewBox="0 0 14 13"><path d="M7 .500L13.500 12.500H.5z" fill="#a49d7c"/><path d="M7 4.500v4M7 10v1.500" stroke="#2b2b2b" stroke-width="1.600"/></svg>
<span class="t" style="left:1251px;top:88px;font-size:12.500px;color:#bbb">1</span>
<svg class="a" style="left:1265px;top:91px" width="15" height="14" viewBox="0 0 15 14"><path d="M2 6l3.500 3.500L12 1.500" fill="none" stroke="#499c54" stroke-width="2"/><path d="M1 12l2-1.500 2 1.500 2-1.500 2 1.500 2-1.500 2 1.500" fill="none" stroke="#499c54" stroke-width="1"/></svg>
<span class="t" style="left:1281px;top:88px;font-size:12.500px;color:#bbb">3</span>
<svg class="a" style="left:1299px;top:94px" width="10" height="7"><path d="M1 6l4-4.500L9 6" fill="none" stroke="#bbb" stroke-width="1.500"/></svg>
<svg class="a" style="left:1320px;top:94px" width="10" height="7"><path d="M1 1l4 4.500L9 1" fill="none" stroke="#bbb" stroke-width="1.500"/></svg>
<div class="a" style="left:1322px;top:116px;width:14px;height:2px;background:#d5a21c"></div>
<div class="a" style="left:1322px;top:142px;width:14px;height:2px;background:#d5a21c"></div>
<div class="a" style="left:1322px;top:148px;width:14px;height:2px;background:#d5a21c"></div>
<div class="a" style="left:1322px;top:153px;width:14px;height:2px;background:#d5a21c"></div>
<div class="a" style="left:1322px;top:158px;width:14px;height:2px;background:#d5a21c"></div>
<div class="a" style="left:1322px;top:163px;width:14px;height:2px;background:#d5a21c"></div>
<div class="a" style="left:1329px;top:283px;width:7px;height:132px;background:rgba(150,150,150,.38)"></div>
<div class="a" style="left:1322px;top:267px;width:14px;height:2px;background:#d5a21c"></div>
<div class="a" style="left:1322px;top:298px;width:14px;height:2px;background:#d5a21c"></div>
<div class="a" style="left:1322px;top:335px;width:14px;height:7px;background:#d5a21c"></div>
<div class="a" style="left:1322px;top:345px;width:14px;height:2px;background:#d5a21c"></div>
<div class="a" style="left:1322px;top:350px;width:14px;height:2px;background:#d5a21c"></div>
<div class="a" style="left:1322px;top:486px;width:14px;height:2px;background:#d5a21c"></div>
<div class="a" style="left:1322px;top:491px;width:14px;height:2px;background:#d5a21c"></div>
<div class="a" style="left:1322px;top:543px;width:14px;height:2px;background:#6e7072"></div>
<div class="a" style="left:1318px;top:240px;width:2px;height:11px;background:#4c8a5a"></div>
<div class="a" style="left:1318px;top:266px;width:2px;height:5px;background:#4a6fa3"></div>
<div class="a" style="left:1318px;top:297px;width:2px;height:5px;background:#4a6fa3"></div>
<div class="a" style="left:1319px;top:314px;width:1.5px;height:103px;background:#44618f"></div>
<div class="a" style="left:1318px;top:496px;width:2px;height:110px;background:#49735a"></div>
<svg class="a" style="left:408px;top:236px" width="922" height="238"><rect x="1.75" y="1.75" width="918.5" height="234.5" rx="2" fill="none" stroke="#ee2a20" stroke-width="3.5"/></svg>
<svg class="a" style="left:745.5px;top:347px" width="184.0" height="33.5"><rect x="1.7" y="1.7" width="180.6" height="30.1" rx="2" fill="none" stroke="#ee2a20" stroke-width="3.4"/></svg>
<svg class="a" style="left:1054px;top:348.5px" width="179.5" height="32.0"><rect x="1.7" y="1.7" width="176.1" height="28.6" rx="2" fill="none" stroke="#ee2a20" stroke-width="3.4"/></svg>
<svg class="a" style="left:109.5px;top:484px" width="150.0" height="34"><rect x="1.7" y="1.7" width="146.6" height="30.6" rx="2.5" fill="none" stroke="#ee2a20" stroke-width="3.4"/></svg>
<div class="a" style="left:1361px;top:604px;width:5px;height:124px;background:#dedede"></div>
<div class="a" style="left:1356px;top:320px;width:8px;height:59px;border-radius:4px;background:linear-gradient(90deg,#2fae4a,#7de08c 40%,#35b550);border:1px solid #b5c2b8"></div>
<div class="a" style="left:1357px;top:321px;width:6px;height:13px;border-radius:3px 3px 0 0;background:linear-gradient(#3b3d3e 60%,#2fae4a)"></div>
<svg class="a" style="left:1172px;top:666px" width="186" height="40" viewBox="0 0 186 40"><path d="M12 6h16l8 11C43 11 52 7 62 4 49 11 43 18 41 22l10 16H36l-6-9-13 9H2c9-6 17-13 22-18z" fill="#a8a8a8" opacity=".8"/><path d="M2 38c14-10 30-24 60-34C40 14 28 26 17 38z" fill="#8e8e8e" opacity=".5"/><text x="60" y="31.500" transform="skewX(-5)" textLength="117" lengthAdjust="spacingAndGlyphs" font-family="Liberation Sans,Noto Sans CJK SC,sans-serif" font-weight="900" font-size="25.500" fill="#a6a6a6" stroke="#a6a6a6" stroke-width="1.200" stroke-linejoin="round" opacity=".8">自由互联</text></svg>
<svg class="a" style="left:1257px;top:682px" width="14" height="14"><circle cx="6.500" cy="6" r="5" fill="none" stroke="#c4c4c4" stroke-width="1.300"/><path d="M8.500 10l3 2.500" stroke="#c4c4c4" stroke-width="1.300"/></svg>
<span class="t" style="left:1275px;top:679px;font-size:12px;color:#c9c9c9;opacity:.8">Event Log</span>
<div class="a" style="left:1170px;top:702px;width:196px;height:25.500px;background:#fdfdfd;border-radius:3px 0 0 0"></div>
<div class="a" style="left:1141px;top:700px;width:29px;height:31px;background:#f2561d;border-radius:6px;transform:rotate(-11deg)"></div>
<span class="a" style="left:1147px;top:697px;font:bold 26px/32px 'Liberation Sans','Noto Sans CJK SC',sans-serif;color:#fff;transform:rotate(-8deg) skewX(-8deg) scaleX(1.350)">S</span>
<span class="a" style="left:1177px;top:705px;font:bold 15px/20px 'Liberation Sans','Noto Sans CJK SC',sans-serif;color:#1068c8">中</span>
<svg class="a" style="left:1203px;top:707px" width="14" height="16"><circle cx="2.800" cy="3.500" r="1.700" fill="none" stroke="#1068c8" stroke-width="1.500"/><path d="M9 7.500h3c0 3-1 4.500-3 5.500l-.6-.9c1-.6 1.400-1.300 1.400-2.100H9z" fill="#1068c8"/></svg>
<div class="a" style="left:1226px;top:708px;width:15px;height:15px;border-radius:8px;background:#1068c8"><div class="a" style="left:3.500px;top:8px;width:8px;height:4px;border-radius:0 0 4px 4px;background:#fff"></div><div class="a" style="left:4px;top:3.500px;width:2px;height:3px;background:#fff"></div><div class="a" style="left:9px;top:3.500px;width:2px;height:3px;background:#fff"></div></div>
<svg class="a" style="left:1250px;top:706px" width="14" height="20"><rect x="4" y="0" width="6" height="11" rx="3" fill="#1068c8"/><path d="M1.500 8a5.500 5.500 0 0011 0M7 14v4" fill="none" stroke="#1068c8" stroke-width="1.600"/></svg>
<svg class="a" style="left:1274px;top:710px" width="16" height="11"><rect x="0" y="0" width="16" height="11" rx="1.500" fill="#1068c8"/><path d="M2 3h12M2 5.500h12" stroke="#fff" stroke-width="1.200" stroke-dasharray="1.500 1"/><path d="M4 8.500h8" stroke="#fff" stroke-width="1.200"/></svg>
<svg class="a" style="left:1298px;top:706px" width="17" height="17"><circle cx="7" cy="4.500" r="3.800" fill="#1068c8"/><path d="M0 16c0-6 3-7.500 7-7.500s7 1.500 7 7.500z" fill="#1068c8"/><rect x="7" y="9" width="10" height="8" fill="#1068c8"/><text x="12" y="16" text-anchor="middle" font-family="Liberation Sans,sans-serif" font-size="7" font-weight="bold" fill="#fff">19</text></svg>
<svg class="a" style="left:1323px;top:707px" width="15" height="15"><path d="M0 1.500h4.500c1 1.500 5 1.500 6 0H15v4h-2.500V15h-10V5.500H0z" fill="#1068c8"/></svg>
<svg class="a" style="left:1347px;top:708px" width="14" height="14"><rect x="0" y="0" width="6" height="6" rx="1.200" fill="#1068c8"/><rect x="8" y="0" width="6" height="6" rx="3" fill="#1068c8"/><rect x="0" y="8" width="6" height="6" rx="1.200" fill="#1068c8"/><rect x="8" y="8" width="6" height="6" rx="1.200" fill="#1068c8"/></svg>
<span class="a" style="left:1254px;top:696px;font:13.700px/20px 'Liberation Sans','Noto Sans CJK SC',sans-serif;color:#fff;text-shadow:0 0 1.500px #000,0 0 1.500px #000,0 0 2px #222,1px 1px 1px #333;white-space:pre">@掘金技术社区</span>
</body></html>
